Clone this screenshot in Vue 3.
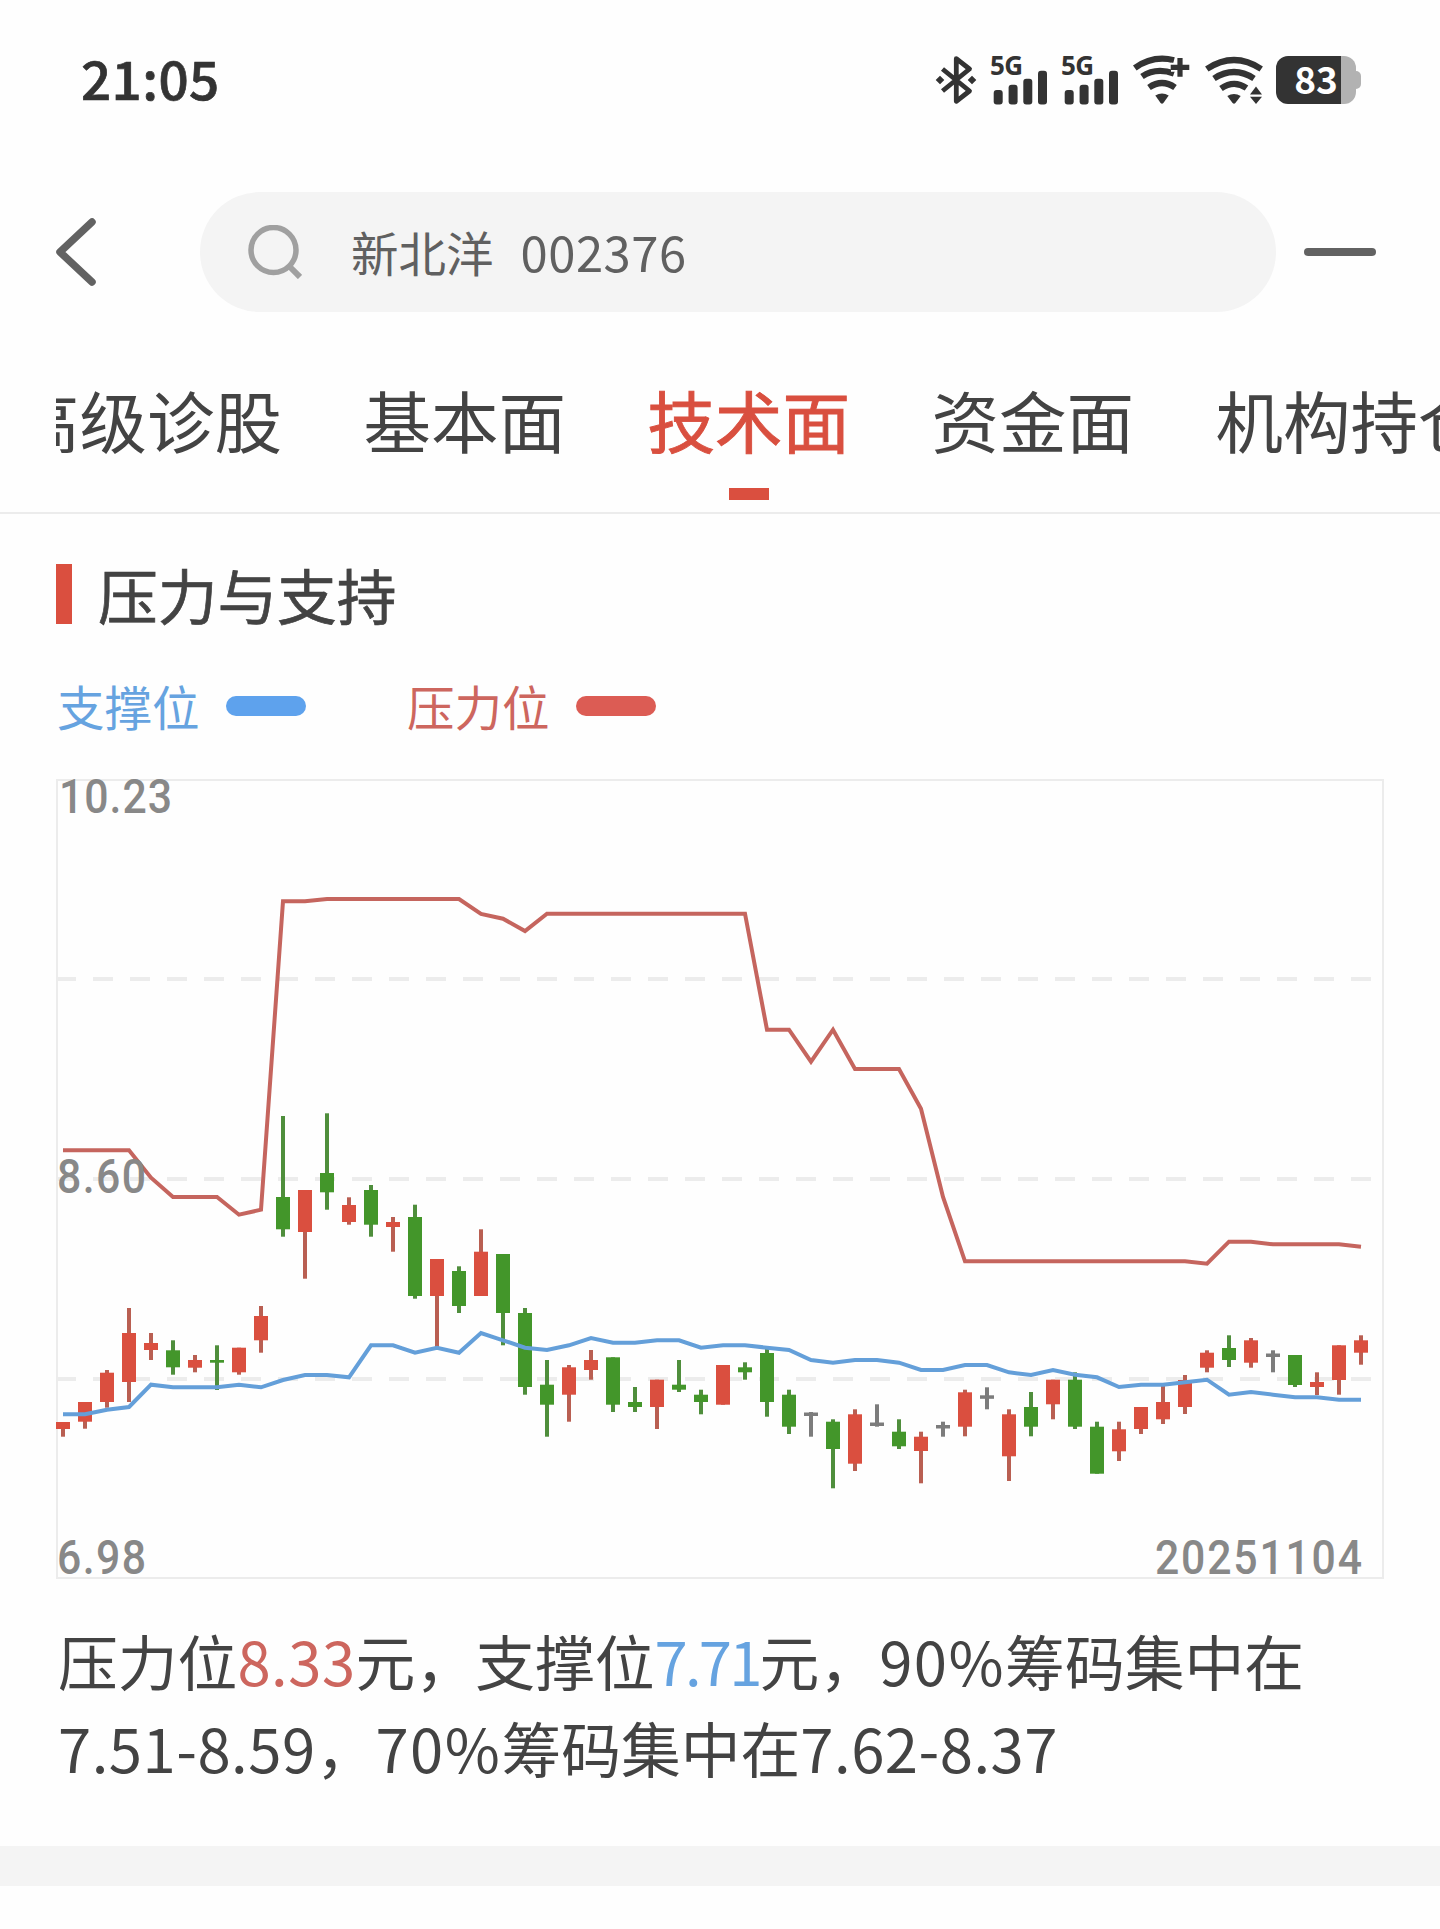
<template>
  <div class="page">
    <header class="status-bar">
      <span class="time">21:05</span>
      <div class="status-icons">
        <svg class="bluetooth" width="40" height="48" viewBox="0 0 40 48">
          <path d="M6.5 13 L33.5 35 L20.3 45.3 V2.7 L33.5 13 L6.5 35" fill="none" stroke="#333" stroke-width="4.8" stroke-linejoin="round" />
          <path d="M4 19.7 L8.3 24 L4 28.3 L-0.3 24 Z M36 19.7 L40.3 24 L36 28.3 L31.7 24 Z" fill="#333" />
        </svg>
        <svg v-for="n in 2" :key="n" class="signal" width="56" height="49" viewBox="0 0 56 49">
          <text x="-1" y="19" class="network" textLength="33">5G</text>
          <rect x="2.7" y="34" width="9" height="14.4" rx="3" fill="#333" />
          <rect x="17.6" y="28.7" width="9" height="19.7" rx="3" fill="#333" />
          <rect x="32.3" y="22.7" width="9" height="25.7" rx="3" fill="#333" />
          <rect x="47" y="14.7" width="9" height="33.7" rx="3" fill="#333" />
        </svg>
        <svg class="wifi-plus" width="57" height="48" viewBox="0 0 57 48">
          <g fill="none" stroke="#333" stroke-width="6.2">
            <path d="M1.8 12 Q20 -1 41 4.2" />
            <path d="M9 20.5 Q23 11 41 17.5" />
            <path d="M16 31.5 Q29 22.5 42 31.5" />
          </g>
          <path d="M22.3 39.5 Q29 35.5 35.7 39.5 L30.4 47 Q29 48.6 27.6 47 Z" fill="#333" />
          <path d="M38 11.3 H57 M47 1 V22" stroke="#fefefe" stroke-width="9" />
          <path d="M37.7 11.3 H56.3 M47 2 V20.7" stroke="#333" stroke-width="5.2" />
        </svg>
        <svg class="wifi" width="58" height="48" viewBox="0 0 58 48">
          <g fill="none" stroke="#333" stroke-width="6.2">
            <path d="M1.8 13 Q29 -5 56.2 13" />
            <path d="M9 22.5 Q29 9.5 49 22.5" />
            <path d="M16 32.5 Q29 23.5 41.5 32" />
          </g>
          <path d="M22.3 40 Q29 36 35.7 40 L30.4 47 Q29 48.6 27.6 47 Z" fill="#333" />
          <path d="M51 30.5 L57 38.5 H45 Z M45 40.8 H57 L51 48 Z" fill="#333" />
        </svg>
        <div class="battery">
          <div class="battery-body"><span>83</span></div>
          <div class="battery-nub"></div>
        </div>
      </div>
    </header>

    <nav class="search-row">
      <svg class="back" width="42" height="70" viewBox="0 0 42 70">
        <path d="M37 5 L5 35 L37 65" fill="none" stroke="#626262" stroke-width="7.5" stroke-linecap="round" stroke-linejoin="round" />
      </svg>
      <div class="search-box">
        <svg width="54" height="54" viewBox="0 0 54 54">
          <circle cx="25.5" cy="25" r="22.5" fill="none" stroke="#a0a0a0" stroke-width="5.5" />
          <path d="M42 42 L52 52" stroke="#a0a0a0" stroke-width="6" />
        </svg>
        <span class="stock-name">新北洋</span>
        <span class="stock-code">002376</span>
      </div>
      <div class="minimize"></div>
    </nav>

    <div class="tabs">
      <div class="tabs-track">
        <div v-for="tab in tabs" :key="tab" class="tab" :class="{ active: tab === activeTab }" @click="activeTab = tab">
          {{ tab }}
        </div>
      </div>
    </div>

    <section class="card">
      <h2 class="title"><span>压力与支持</span></h2>
      <div class="legend">
        <div class="legend-item support">支撑位<i></i></div>
        <div class="legend-item pressure">压力位<i></i></div>
      </div>

      <svg class="chart" width="1328" height="802" viewBox="0 0 1328 802">
        <rect x="1" y="2" width="1326" height="798" fill="none" stroke="#ececec" stroke-width="2" />
        <line v-for="y in [201, 401, 601]" :key="y" x1="0" x2="1316" :y1="y" :y2="y" class="grid" />
        <g v-for="(c, i) in candles" :key="i" :class="c[0]">
          <rect class="wick" :x="xAt(i) - 2" :y="c[1]" width="4" :height="c[4] - c[1]" />
          <rect class="body" :x="xAt(i) - 7" :y="c[2]" width="14" :height="c[3] - c[2]" />
        </g>
        <polyline :points="supportPoints" class="line-support" />
        <polyline :points="pressurePoints" class="line-pressure" />
        <g class="axis">
          <text v-for="label in axisLabels" :key="label.text" :transform="`translate(${label.x} ${label.y}) scale(0.9 1)`" :textLength="label.width / 0.9">{{ label.text }}</text>
        </g>
      </svg>

      <p class="summary">
        压力位<span class="num red">8.33</span>元，支撑位<span class="num blue">7.71</span>元，<span class="percent">90%</span>筹码集中在<br /><span class="num">7.51-8.59</span>，<span class="percent">70%</span>筹码集中在<span class="num">7.62-8.37</span>
      </p>
    </section>
    <div class="divider"></div>
  </div>
</template>

<script setup>
import { ref, computed } from 'vue';

const tabs = ['高级诊股', '基本面', '技术面', '资金面', '机构持仓'];
const activeTab = ref('技术面');

const axisLabels = [
  { text: '10.23', x: 3, y: 35, width: 113 },
  { text: '8.60', x: 1, y: 414.5, width: 89 },
  { text: '6.98', x: 1, y: 796, width: 89 },
  { text: '20251104', x: 1099, y: 796, width: 207 },
];

// [direction, wick top, body top, body bottom, wick bottom]
const candles = [
  ['up', 644, 644, 651, 658.7],
  ['up', 624, 624, 643.7, 650.7],
  ['up', 592, 594.7, 624, 629.7],
  ['up', 530, 555, 604, 624],
  ['up', 555, 565, 572, 582],
  ['down', 562.3, 572.3, 589.3, 596.7],
  ['up', 577, 582, 589.7, 594.3],
  ['down', 567.3, 582, 584.7, 612],
  ['up', 569.7, 569.7, 594.3, 596.7],
  ['up', 528, 538, 562.3, 574.7],
  ['down', 338, 419, 451.3, 458.7],
  ['up', 412, 412, 454, 500.7],
  ['down', 335.3, 395, 414.3, 431.7],
  ['up', 419.3, 427, 444, 446.7],
  ['down', 407, 412, 446.7, 458.7],
  ['up', 439, 444, 449, 473.7],
  ['down', 426.7, 439, 518, 520.7],
  ['up', 481, 481, 518, 569.7],
  ['down', 488.3, 493, 528, 535],
  ['up', 451.3, 473.7, 518, 518],
  ['down', 476, 476, 535, 567.3],
  ['down', 530, 535, 609, 616.7],
  ['down', 582, 606.7, 626.7, 658.7],
  ['up', 587, 589.3, 616.7, 643.7],
  ['up', 572, 582, 592, 601.7],
  ['down', 579.3, 579.3, 626.7, 634],
  ['down', 609, 624, 629, 634],
  ['up', 601.7, 601.7, 629, 651],
  ['down', 582, 606.7, 611.7, 614],
  ['down', 611.7, 616.7, 624, 636.3],
  ['up', 587, 587, 626.7, 626.7],
  ['down', 584.3, 589.3, 594.3, 601.7],
  ['down', 571, 575, 624, 638.7],
  ['down', 611.7, 616.7, 648.7, 656],
  ['flat', 634, 634.5, 638, 658.7],
  ['down', 641.3, 643.7, 671, 710.3],
  ['up', 631.3, 636.3, 685.7, 693],
  ['flat', 626.3, 644.5, 648, 648.7],
  ['down', 641.3, 653.7, 668.3, 671],
  ['up', 653.7, 658.7, 673, 705.3],
  ['flat', 643.7, 647, 650.5, 658.7],
  ['up', 611.7, 614.3, 648.7, 658.3],
  ['flat', 609.3, 617.3, 620.8, 631.3],
  ['up', 631.3, 636.3, 678.3, 703],
  ['down', 614, 629, 648.7, 658.3],
  ['up', 601.7, 601.7, 626.3, 641.3],
  ['down', 594.3, 601.7, 648.7, 651],
  ['down', 643.7, 648.7, 695.7, 695.7],
  ['up', 643.7, 651.3, 673.3, 683],
  ['up', 629, 629, 651, 656],
  ['up', 607.7, 624, 641.3, 646],
  ['up', 597, 602, 629, 636],
  ['up', 572.3, 574.7, 589.7, 594.3],
  ['down', 557.3, 570, 582, 589],
  ['up', 560, 562.3, 584.7, 589.7],
  ['flat', 572.3, 575.5, 579, 594.3],
  ['down', 577, 577, 607, 609],
  ['up', 594.3, 604, 609, 617],
  ['up', 567.3, 567.3, 602, 616.7],
  ['up', 557.3, 562.3, 574.7, 586.7],
];

const support = [
  636.3, 636.3, 631.7, 629, 606.7, 609.3, 609.3, 609.3, 606.7, 609.3,
  602, 597, 597, 599.3, 567.3, 567.3, 574.7, 569.7, 574.7, 555,
  562.3, 569.7, 572, 567.3, 560, 564.7, 564.7, 562.3, 562.3, 569.7,
  567.3, 567.3, 569.7, 572, 582, 584.7, 582, 582, 584.7, 592,
  592, 587, 587, 594.3, 597, 592, 596.7, 599.3, 609, 606.7,
  606.7, 604.3, 601.7, 616.7, 614, 616.7, 619.3, 619.3, 621.7, 621.7,
];

const pressure = [
  372.3, 372.3, 372.3, 372.3, 399.7, 419, 419, 419, 436.7, 431.7,
  123.3, 123.3, 121, 121, 121, 121, 121, 121, 121, 136,
  140.7, 153, 135.7, 135.7, 135.7, 135.7, 135.7, 135.7, 135.7, 135.7,
  135.7, 135.7, 251.7, 251.7, 283.7, 251.7, 291, 291, 291, 330.7,
  419, 483.3, 483.3, 483.3, 483.3, 483.3, 483.3, 483.3, 483.3, 483.3,
  483.3, 483.3, 485.7, 463.7, 463.7, 466.3, 466.3, 466.3, 466.3, 468.7,
];

const xAt = (i) => 7 + i * 22;
const toPoints = (list) => list.map((y, i) => `${xAt(i)},${y}`).join(' ');
const supportPoints = computed(() => toPoints(support));
const pressurePoints = computed(() => toPoints(pressure));
</script>

<style>
body {
  background: #fefefe;
}
</style>

<style scoped>
.page {
  width: 1440px;
  height: 1929px;
  overflow: hidden;
  background: #fefefe;
  color: #434343;
  font-family: "Noto Sans CJK SC", sans-serif;
}

.status-bar {
  display: flex;
  align-items: center;
  justify-content: space-between;
  height: 160px;
  padding: 0 79px 0 81px;
  box-sizing: border-box;
}

.time {
  padding-bottom: 6px;
  font-size: 53px;
  font-weight: 500;
  color: #333;
  -webkit-text-stroke: 0.7px #333;
  letter-spacing: 0.4px;
}

.status-icons {
  display: flex;
  align-items: center;
}

.status-icons svg {
  overflow: visible;
}

.signal {
  margin-left: 15px;
}

.network {
  font-family: "Noto Sans", sans-serif;
  font-size: 26px;
  font-weight: 700;
  fill: #333;
}

.wifi-plus {
  margin-left: 15px;
}

.wifi {
  margin-left: 15px;
}

.battery {
  display: flex;
  align-items: center;
  margin-left: 13px;
}

.battery-body {
  display: flex;
  justify-content: center;
  width: 80px;
  height: 48px;
  border-radius: 12px;
  background: linear-gradient(to right, #333 65px, #b2b2b2 65px);
  color: #fff;
  font-size: 37px;
  font-weight: 700;
  line-height: 45px;
}

.battery-nub {
  width: 5px;
  height: 18px;
  border-radius: 0 5px 5px 0;
  background: #b2b2b2;
}

.search-row {
  display: flex;
  align-items: center;
  height: 184px;
  padding: 0 64px 0 55px;
}

.search-box {
  display: flex;
  align-items: center;
  width: 1076px;
  height: 120px;
  margin-left: 103px;
  padding-left: 48px;
  box-sizing: border-box;
  border-radius: 60px;
  background: #f4f4f4;
  color: #606060;
  font-size: 47.5px;
  line-height: 116px;
}

.stock-name {
  margin-left: 49px;
  padding-bottom: 1px;
}

.stock-code {
  margin-left: 27px;
  padding-bottom: 3px;
  font-size: 49px;
  letter-spacing: 0.5px;
}

.minimize {
  width: 72px;
  height: 8px;
  margin-left: 28px;
  border-radius: 4px;
  background: #626262;
}

.tabs {
  height: 170px;
  padding-left: 56px;
  box-sizing: border-box;
  border-bottom: 2px solid #ececec;
}

.tabs-track {
  display: flex;
  gap: 81.5px;
  overflow: hidden;
  height: 168px;
}

.tab {
  position: relative;
  flex: none;
  font-size: 67.5px;
  line-height: 150px;
  white-space: nowrap;
}

.tab:first-child {
  margin-left: -44px;
}

.tab.active {
  color: #d94f3f;
  -webkit-text-stroke: 0.9px #d94f3f;
}

.tab.active::after {
  content: "";
  position: absolute;
  left: 50%;
  top: 144px;
  width: 40px;
  height: 12px;
  margin-left: -20px;
  background: #da4f3f;
}

.card {
  padding: 50px 56px 0;
}

.title {
  display: flex;
  align-items: center;
  height: 60px;
  margin: 0;
  font-size: 59.7px;
  font-weight: 400;
  line-height: 60px;
  -webkit-text-stroke: 0.7px #434343;
}

.title::before {
  content: "";
  width: 16px;
  height: 60px;
  margin-right: 26px;
  background: #da4f3f;
}

.title span {
  padding-bottom: 1px;
}

.legend {
  display: flex;
  gap: 100px;
  margin-top: 46px;
  padding-left: 1px;
  font-size: 47.5px;
  line-height: 72px;
}

.legend-item {
  display: flex;
  align-items: center;
  width: 250px;
}

.legend-item i {
  width: 80px;
  height: 20px;
  margin-left: 26px;
  border-radius: 10px;
}

.support {
  color: #66a3e0;
}

.support i {
  background: #5ea2ed;
}

.pressure {
  color: #cd665e;
}

.pressure i {
  background: #dc5c54;
}

.chart {
  display: block;
  margin-top: 36px;
  overflow: visible;
}

.grid {
  stroke: #ececec;
  stroke-width: 4;
  stroke-dasharray: 20 17;
}

.up .wick {
  fill: #b95f52;
}

.up .body {
  fill: #da4f3f;
}

.down .wick {
  fill: #4f8e3c;
}

.down .body {
  fill: #43962a;
}

.flat rect {
  fill: #7c7c7c;
}

.line-support,
.line-pressure {
  fill: none;
  stroke-width: 4;
}

.line-support {
  stroke: #649fd9;
}

.line-pressure {
  stroke: #c5655e;
}

.axis text {
  font-family: Roboto, sans-serif;
  font-size: 47.5px;
  font-weight: 500;
  fill: #888;
}

.summary {
  margin: 37px 0 0;
  padding-left: 2px;
  font-size: 59.8px;
  line-height: 87px;
  white-space: nowrap;
}

.num {
  letter-spacing: 0.5px;
}

.num.red {
  color: #cd665e;
}

.num.blue {
  color: #66a3e0;
  letter-spacing: -2.8px;
}

.percent {
  letter-spacing: 1.5px;
}

.divider {
  height: 40px;
  margin-top: 55px;
  background: #f4f4f4;
}
</style>
